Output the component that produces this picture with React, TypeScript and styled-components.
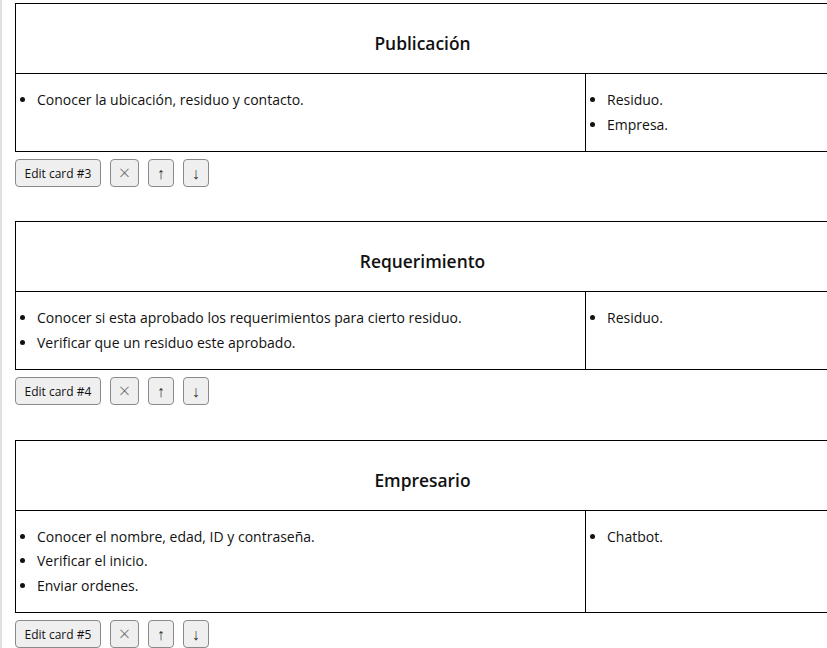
import React from "react";
import styled, { createGlobalStyle } from "styled-components";

const GlobalStyle = createGlobalStyle`
  html, body {
    margin: 0;
    padding: 0;
    overflow: hidden;
    background: #ffffff;
  }
  body {
    font-family: "Open Sans", "Noto Sans", sans-serif;
    color: #111;
  }
`;

const Page = styled.div`
  border-left: 2px solid #e0e0e0;
  min-height: 648px;
  padding: 3px 0 0 13px;
  box-sizing: border-box;
`;

const CardBlock = styled.section`
  margin-bottom: 34.4px;
`;

const Card = styled.div`
  width: 815px;
  display: grid;
  grid-template-columns: 570px 1fr;
  border: 1px solid #000;
  box-sizing: border-box;
`;

const Header = styled.div`
  grid-column: 1 / span 2;
  border-bottom: 1px solid #000;
  text-align: center;
  font-size: 17.4px;
  font-weight: 600;
  line-height: 26px;
  padding: 26px 0 17px;
`;

const Cell = styled.div<{ $divider?: boolean }>`
  border-right: ${(p) => (p.$divider ? "1px solid #000" : "none")};
  padding: 14px 0 14px;
`;

const List = styled.ul`
  margin: 0;
  padding-left: 21px;
  font-size: 14px;
  line-height: 24.5px;
`;

const Toolbar = styled.div`
  display: flex;
  gap: 9px;
  margin-top: 7px;
`;

const Button = styled.button`
  height: 28px;
  padding: 0 8.5px;
  font-family: "Open Sans", "Noto Sans", sans-serif;
  font-size: 12px;
  color: #111;
  background: #efefef;
  border: 1px solid #8a8a8a;
  border-radius: 4px;
  box-sizing: border-box;
`;

const IconButton = styled(Button)<{ $wide?: boolean; $muted?: boolean }>`
  width: ${(p) => (p.$wide ? "29px" : "26px")};
  padding: 0;
  font-size: ${(p) => (p.$wide ? "20px" : "16px")};
  font-weight: 300;
  line-height: 1;
  color: ${(p) => (p.$muted ? "#6a6a6a" : "#333")};
  display: flex;
  align-items: center;
  justify-content: center;
`;

type CardData = {
  id: number;
  title: string;
  left: string[];
  right: string[];
};

const cards: CardData[] = [
  {
    id: 3,
    title: "Publicación",
    left: ["Conocer la ubicación, residuo y contacto."],
    right: ["Residuo.", "Empresa."],
  },
  {
    id: 4,
    title: "Requerimiento",
    left: [
      "Conocer si esta aprobado los requerimientos para cierto residuo.",
      "Verificar que un residuo este aprobado.",
    ],
    right: ["Residuo."],
  },
  {
    id: 5,
    title: "Empresario",
    left: [
      "Conocer el nombre, edad, ID y contraseña.",
      "Verificar el inicio.",
      "Enviar ordenes.",
    ],
    right: ["Chatbot."],
  },
];

export default function App() {
  return (
    <>
      <GlobalStyle />
      <Page>
        {cards.map((c) => (
          <CardBlock key={c.id}>
            <Card>
              <Header>{c.title}</Header>
              <Cell $divider>
                <List>
                  {c.left.map((t) => (
                    <li key={t}>{t}</li>
                  ))}
                </List>
              </Cell>
              <Cell>
                <List>
                  {c.right.map((t) => (
                    <li key={t}>{t}</li>
                  ))}
                </List>
              </Cell>
            </Card>
            <Toolbar>
              <Button>Edit card #{c.id}</Button>
              <IconButton $wide $muted>×</IconButton>
              <IconButton>↑</IconButton>
              <IconButton>↓</IconButton>
            </Toolbar>
          </CardBlock>
        ))}
      </Page>
    </>
  );
}
